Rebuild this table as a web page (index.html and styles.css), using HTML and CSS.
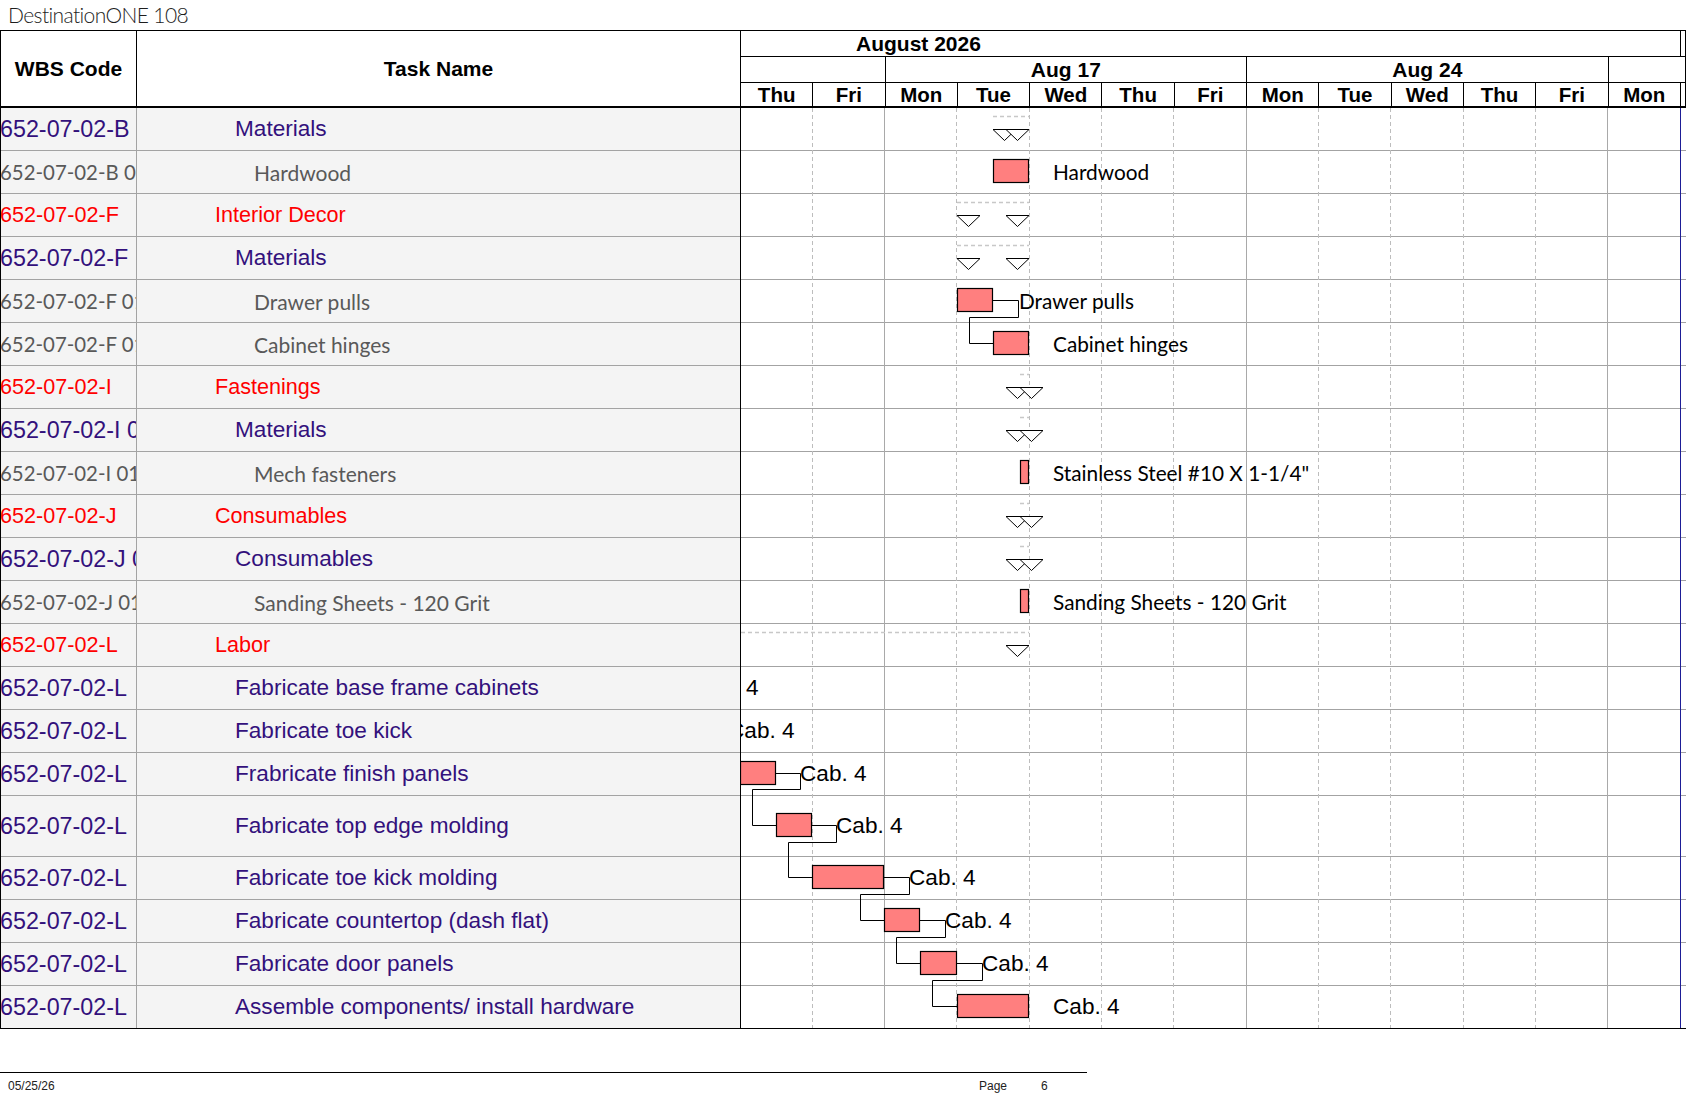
FILE: index.html
```html
<!DOCTYPE html>
<html>
<head>
<meta charset="utf-8">
<title>DestinationONE 108</title>
<link rel="stylesheet" href="styles.css">
</head>
<body>
<div class="title">DestinationONE 108</div>
<div class="sheet">
  <div class="grid-pane">
    <div class="grid-head">
      <div class="h-wbs">WBS Code</div>
      <div class="h-task">Task Name</div>
    </div>
    <div class="row l2"><div class="wbs">652-07-02-B</div><div class="task">Materials</div></div>
    <div class="row l3"><div class="wbs">652-07-02-B 01 01</div><div class="task">Hardwood</div></div>
    <div class="row l1"><div class="wbs">652-07-02-F</div><div class="task">Interior Decor</div></div>
    <div class="row l2"><div class="wbs">652-07-02-F</div><div class="task">Materials</div></div>
    <div class="row l3"><div class="wbs">652-07-02-F 01 01</div><div class="task">Drawer pulls</div></div>
    <div class="row l3"><div class="wbs">652-07-02-F 01 02</div><div class="task">Cabinet hinges</div></div>
    <div class="row l1"><div class="wbs">652-07-02-I</div><div class="task">Fastenings</div></div>
    <div class="row l2"><div class="wbs">652-07-02-I 01</div><div class="task">Materials</div></div>
    <div class="row l3"><div class="wbs">652-07-02-I 01 01</div><div class="task">Mech fasteners</div></div>
    <div class="row l1"><div class="wbs">652-07-02-J</div><div class="task">Consumables</div></div>
    <div class="row l2"><div class="wbs">652-07-02-J 01</div><div class="task">Consumables</div></div>
    <div class="row l3"><div class="wbs">652-07-02-J 01 01</div><div class="task">Sanding Sheets - 120 Grit</div></div>
    <div class="row l1"><div class="wbs">652-07-02-L</div><div class="task">Labor</div></div>
    <div class="row l2"><div class="wbs">652-07-02-L</div><div class="task">Fabricate base frame cabinets</div></div>
    <div class="row l2"><div class="wbs">652-07-02-L</div><div class="task">Fabricate toe kick</div></div>
    <div class="row l2"><div class="wbs">652-07-02-L</div><div class="task">Frabricate finish panels</div></div>
    <div class="row l2 tall"><div class="wbs">652-07-02-L</div><div class="task">Fabricate top edge molding</div></div>
    <div class="row l2"><div class="wbs">652-07-02-L</div><div class="task">Fabricate toe kick molding</div></div>
    <div class="row l2"><div class="wbs">652-07-02-L</div><div class="task">Fabricate countertop (dash flat)</div></div>
    <div class="row l2"><div class="wbs">652-07-02-L</div><div class="task">Fabricate door panels</div></div>
    <div class="row l2"><div class="wbs">652-07-02-L</div><div class="task">Assemble components/ install hardware</div></div>
  </div>

  <div class="gantt-pane">
    <div class="gantt-head">
      <div class="month"><span>August 2026</span></div>
      <div class="strip-top"></div>
      <div class="week w2"></div>
      <div class="week w5">Aug 17</div>
      <div class="week w5">Aug 24</div>
      <div class="week wlast"></div>
      <div class="day">Thu</div>
      <div class="day">Fri</div>
      <div class="day">Mon</div>
      <div class="day">Tue</div>
      <div class="day">Wed</div>
      <div class="day">Thu</div>
      <div class="day">Fri</div>
      <div class="day">Mon</div>
      <div class="day">Tue</div>
      <div class="day">Wed</div>
      <div class="day">Thu</div>
      <div class="day">Fri</div>
      <div class="day">Mon</div>
      <div class="day strip"></div>
    </div>
    <div class="gantt-body">
      <div class="trow"></div><div class="trow"></div><div class="trow"></div>
      <div class="trow"></div><div class="trow"></div><div class="trow"></div>
      <div class="trow"></div><div class="trow"></div><div class="trow"></div>
      <div class="trow"></div><div class="trow"></div><div class="trow"></div>
      <div class="trow"></div><div class="trow"></div><div class="trow"></div>
      <div class="trow"></div><div class="trow tall"></div><div class="trow"></div>
      <div class="trow"></div><div class="trow"></div><div class="trow"></div>

      <svg class="chart" width="944" height="921" viewBox="741 108 944 921" xmlns="http://www.w3.org/2000/svg">
        <g class="vlines">
          <line class="dash" x1="812.5" y1="108" x2="812.5" y2="1028"/>
          <line class="solid" x1="884.5" y1="108" x2="884.5" y2="1028"/>
          <line class="dash" x1="956.5" y1="108" x2="956.5" y2="1028"/>
          <line class="dash" x1="1029.5" y1="108" x2="1029.5" y2="1028"/>
          <line class="dash" x1="1101.5" y1="108" x2="1101.5" y2="1028"/>
          <line class="dash" x1="1173.5" y1="108" x2="1173.5" y2="1028"/>
          <line class="solid" x1="1246.5" y1="108" x2="1246.5" y2="1028"/>
          <line class="dash" x1="1318.5" y1="108" x2="1318.5" y2="1028"/>
          <line class="dash" x1="1390.5" y1="108" x2="1390.5" y2="1028"/>
          <line class="dash" x1="1463.5" y1="108" x2="1463.5" y2="1028"/>
          <line class="dash" x1="1535.5" y1="108" x2="1535.5" y2="1028"/>
          <line class="solid" x1="1607.5" y1="108" x2="1607.5" y2="1028"/>
          <line class="blue" x1="1680.5" y1="108" x2="1680.5" y2="1028"/>
        </g>

        <g class="summ">
          <line x1="993" y1="116.5" x2="1029" y2="116.5"/>
          <line x1="957" y1="202.5" x2="1029" y2="202.5"/>
          <line x1="957" y1="245.5" x2="1029" y2="245.5"/>
          <line x1="1020" y1="374.5" x2="1029" y2="374.5"/>
          <line x1="1020" y1="417.5" x2="1029" y2="417.5"/>
          <line x1="1020" y1="503.5" x2="1029" y2="503.5"/>
          <line x1="1020" y1="546.5" x2="1029" y2="546.5"/>
          <line x1="741" y1="632.5" x2="1029" y2="632.5"/>
        </g>

        <g class="tri">
          <polygon points="993,129.5 1016,129.5 1004.5,140.5"/>
          <polygon points="1006,129.5 1029,129.5 1017.5,140.5"/>
          <polygon points="957,215.5 980,215.5 968.5,226.5"/>
          <polygon points="1006,215.5 1029,215.5 1017.5,226.5"/>
          <polygon points="957,258.5 980,258.5 968.5,269.5"/>
          <polygon points="1006,258.5 1029,258.5 1017.5,269.5"/>
          <polygon points="1006,387.5 1029,387.5 1017.5,398.5"/>
          <polygon points="1020,387.5 1043,387.5 1031.5,398.5"/>
          <polygon points="1006,430.5 1029,430.5 1017.5,441.5"/>
          <polygon points="1020,430.5 1043,430.5 1031.5,441.5"/>
          <polygon points="1006,516.5 1029,516.5 1017.5,527.5"/>
          <polygon points="1020,516.5 1043,516.5 1031.5,527.5"/>
          <polygon points="1006,559.5 1029,559.5 1017.5,570.5"/>
          <polygon points="1020,559.5 1043,559.5 1031.5,570.5"/>
          <polygon points="1006,645.5 1029,645.5 1017.5,656.5"/>
        </g>

        <g class="links">
          <polyline points="993,300.5 1018.5,300.5 1018.5,317.5 969.5,317.5 969.5,343.5 993,343.5"/>
          <polyline points="776,773.5 800.5,773.5 800.5,789.5 752.5,789.5 752.5,825.5 776,825.5"/>
          <polyline points="812,825.5 836.5,825.5 836.5,842.5 788.5,842.5 788.5,877.5 812,877.5"/>
          <polyline points="884,877.5 909.5,877.5 909.5,894.5 860.5,894.5 860.5,920.5 884,920.5"/>
          <polyline points="920,920.5 945.5,920.5 945.5,937.5 896.5,937.5 896.5,963.5 920,963.5"/>
          <polyline points="957,963.5 982.5,963.5 982.5,980.5 932.5,980.5 932.5,1006.5 957,1006.5"/>
        </g>

        <g class="bars">
          <rect x="993.5" y="159.5" width="35" height="23"/>
          <rect x="957.5" y="288.5" width="35" height="23"/>
          <rect x="993.5" y="331.5" width="35" height="23"/>
          <rect x="1020.5" y="460.5" width="8" height="23"/>
          <rect x="1020.5" y="589.5" width="8" height="23"/>
          <rect x="740.5" y="761.5" width="35" height="23"/>
          <rect x="776.5" y="813.5" width="35" height="23"/>
          <rect x="812.5" y="865.5" width="71" height="23"/>
          <rect x="884.5" y="908.5" width="35" height="23"/>
          <rect x="920.5" y="951.5" width="36" height="23"/>
          <rect x="957.5" y="994.5" width="71" height="23"/>
        </g>

        <g class="labels">
          <text class="lc" x="1053" y="180">Hardwood</text>
          <text class="lc" x="1019" y="309">Drawer pulls</text>
          <text class="lc" x="1053" y="352">Cabinet hinges</text>
          <text class="lc" x="1053" y="481">Stainless Steel #10 X 1-1/4"</text>
          <text class="lc" x="1053" y="610">Sanding Sheets - 120 Grit</text>
          <text class="la" x="692" y="695">Cab. 4</text>
          <text class="la" x="728" y="738">Cab. 4</text>
          <text class="la" x="800" y="781">Cab. 4</text>
          <text class="la" x="836" y="833">Cab. 4</text>
          <text class="la" x="909" y="885">Cab. 4</text>
          <text class="la" x="945" y="928">Cab. 4</text>
          <text class="la" x="982" y="971">Cab. 4</text>
          <text class="la" x="1053" y="1014">Cab. 4</text>
        </g>
      </svg>
    </div>
  </div>
</div>

<div class="footer">
  <span>05/25/26</span>
  <span>Page</span>
  <span>6</span>
</div>
</body>
</html>
```

FILE: styles.css
```css
html, body {
  margin: 0;
  padding: 0;
  background: #ffffff;
}

body {
  width: 1687px;
  height: 1097px;
  overflow: hidden;
  font-family: "Liberation Sans", Arial, sans-serif;
  color: #000;
}

.title {
  height: 30px;
  box-sizing: border-box;
  padding-left: 8px;
  padding-top: 1px;
  font-family: Lato, "Open Sans", sans-serif;
  font-weight: 300;
  font-size: 21px;
  letter-spacing: -0.6px;
  line-height: 28px;
  color: #1e1e1e;
  white-space: nowrap;
}

.sheet {
  display: flex;
  border-top: 1px solid #000;
  width: 1686px;
}

/* ---------- left grid ---------- */
.grid-pane {
  width: 740px;
  flex: none;
  box-sizing: border-box;
  border-left: 1px solid #000;
}

.grid-head {
  display: grid;
  grid-template-columns: 136px 1fr;
  height: 77px;
  box-sizing: border-box;
  border-bottom: 2px solid #000;
  font-weight: bold;
  font-size: 21px;
}

.h-wbs,
.h-task {
  display: flex;
  align-items: center;
  justify-content: center;
}

.h-wbs {
  border-right: 1px solid #000;
}

.row {
  display: grid;
  grid-template-columns: 136px 1fr;
  height: 43px;
  box-sizing: border-box;
  border-bottom: 1px solid #a3a3a3;
  background: #f4f4f4;
  white-space: nowrap;
}

.row.tall {
  height: 61px;
}

.row:last-child {
  border-bottom-color: #000;
}

.wbs {
  display: flex;
  align-items: center;
  overflow: hidden;
  border-right: 1px solid #a3a3a3;
  text-indent: -1px;
}

.task {
  display: flex;
  align-items: center;
  overflow: hidden;
}

.l1 {
  color: #ff0000;
  font-size: 21.6px;
}

.l1 .task {
  padding-left: 78px;
}

.l2 {
  color: #33117c;
  font-size: 22.6px;
}

.l2 .wbs {
  font-size: 23.3px;
}

.l2 .task {
  padding-left: 98px;
}

.l3 {
  color: #595959;
  font-family: Lato, "Open Sans", sans-serif;
  font-size: 21px;
}

.l3 .wbs {
  font-size: 20.4px;
}

.l3 .task {
  padding-left: 117px;
}

/* ---------- gantt ---------- */
.gantt-pane {
  width: 946px;
  flex: none;
  box-sizing: border-box;
  border-left: 1px solid #000;
}

.gantt-head {
  display: grid;
  grid-template-columns: repeat(13, 72.3077px) 4px;
  grid-template-rows: 26px 26px 25px;
  border-right: 1px solid #000;
  font-weight: bold;
  font-size: 20.5px;
}

.gantt-head > div {
  box-sizing: border-box;
  display: flex;
  align-items: center;
  justify-content: center;
  white-space: nowrap;
}

.month {
  grid-column: 1 / 14;
  border-right: 1px solid #000;
  border-bottom: 1px solid #000;
  justify-content: flex-start !important;
  font-size: 21px;
}

.month span {
  padding-left: 115px;
}

.strip-top {
  border-bottom: 1px solid #000;
}

.week {
  border-bottom: 1px solid #000;
  border-right: 1px solid #000;
  font-size: 21px;
}

.w2 {
  grid-column: span 2;
}

.w5 {
  grid-column: span 5;
}

.wlast {
  grid-column: span 2;
  border-right: none !important;
}

.day {
  border-right: 1px solid #000;
  border-bottom: 2px solid #000;
}

.day.strip {
  border-right: none;
}

.gantt-body {
  position: relative;
  width: 945px;
}

.trow {
  height: 43px;
  box-sizing: border-box;
  border-bottom: 1px solid #a3a3a3;
}

.trow.tall {
  height: 61px;
}

.trow:nth-child(21) {
  border-bottom-color: #000;
}

.chart {
  position: absolute;
  left: 0;
  top: 0;
  overflow: hidden;
}

.vlines line {
  stroke-width: 1;
}

.vlines .dash {
  stroke: #bdbdbd;
  stroke-dasharray: 4 3;
}

.vlines .solid {
  stroke: #a9a9a9;
}

.vlines .blue {
  stroke: #1d1d96;
}

.summ line {
  stroke: #c8c8c8;
  stroke-width: 1.5;
  stroke-dasharray: 4 3;
}

.tri polygon {
  fill: #ffffff;
  stroke: #000;
  stroke-width: 1;
}

.links polyline {
  fill: none;
  stroke: #000;
  stroke-width: 1;
}

.bars rect {
  fill: #ff7f7f;
  stroke: #000;
  stroke-width: 1.2;
}

.lc {
  font-family: Lato, "Open Sans", sans-serif;
  font-size: 20.8px;
  fill: #000;
}

.la {
  font-family: "Liberation Sans", Arial, sans-serif;
  font-size: 22.6px;
  fill: #000;
}

/* ---------- footer ---------- */
.footer {
  margin-top: 43px;
  width: 1087px;
  box-sizing: border-box;
  border-top: 1px solid #000;
  display: grid;
  grid-template-columns: 971px 62px auto;
  padding-left: 8px;
  padding-top: 6px;
  font-family: "Liberation Sans Narrow", "Liberation Sans", Arial, sans-serif;
  font-size: 12px;
  color: #222;
}
```
